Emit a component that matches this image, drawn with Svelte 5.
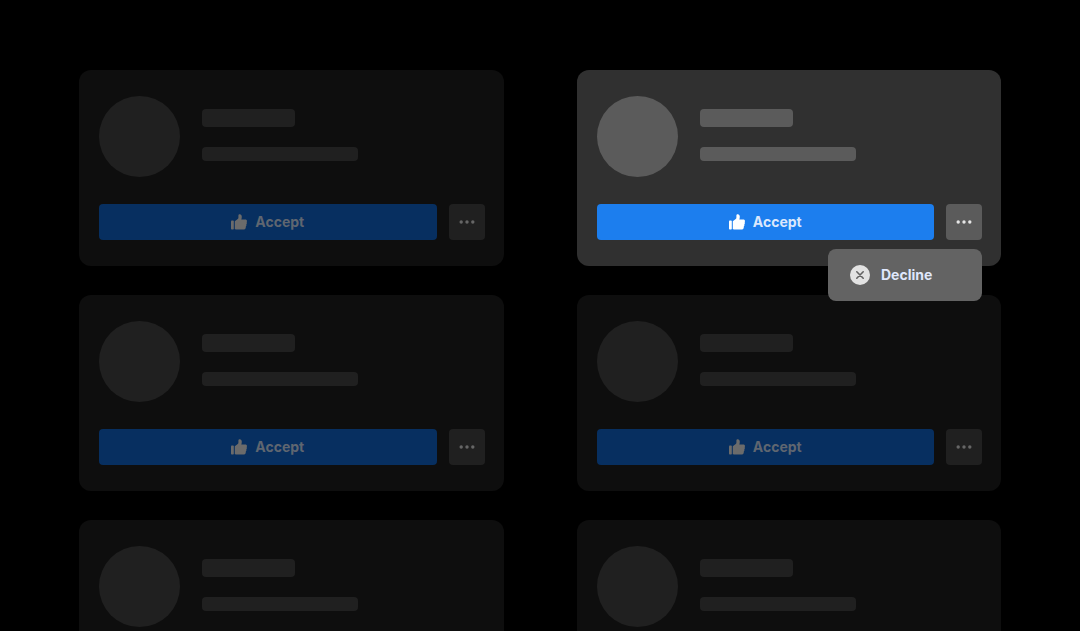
<script lang="ts">
	let requests = $state([
		{ id: 1, open: false },
		{ id: 2, open: true },
		{ id: 3, open: false },
		{ id: 4, open: false },
		{ id: 5, open: false },
		{ id: 6, open: false },
	]);

	function toggleMenu(id: number) {
		for (const request of requests) {
			request.open = request.id === id ? !request.open : false;
		}
	}
</script>

<main class="requests">
	{#each requests as request (request.id)}
		<article class="card" class:active={request.open}>
			<div class="profile">
				<div class="avatar"></div>
				<div class="lines">
					<div class="name"></div>
					<div class="detail"></div>
				</div>
			</div>
			<div class="actions">
				<button type="button" class="accept">
					<svg width="16" height="16" viewBox="0 0 16 16" aria-hidden="true">
						<rect x="0" y="6.6" width="2.8" height="9" rx="0.8" />
						<path
							d="M3.8 7.2 6.7 5.1C7.2 4.7 7.4 4.2 7.4 3.5V1.6C7.4.7 8 .2 8.8.2c1.2 0 2 1.1 2 2.6 0 1.1-.2 1.9-.5 2.6h4c1 0 1.7.6 1.7 1.5 0 .5-.2.8-.4 1.1.2.3.3.6.3 1 0 .6-.2 1-.6 1.3.1.3.2.5.2.8 0 .6-.3 1.1-.7 1.4v.7c0 1.5-1 2.4-2.7 2.4H6.2c-1 0-1.8-.2-2.4-.6Z"
						/>
					</svg>
					<span>Accept</span>
				</button>
				<div class="more-wrap">
					<button
						type="button"
						class="more"
						aria-label="More options"
						aria-expanded={request.open}
						onclick={() => toggleMenu(request.id)}
					>
						<svg width="16" height="4" viewBox="0 0 16 4" aria-hidden="true">
							<circle cx="2.2" cy="2" r="1.7" />
							<circle cx="8" cy="2" r="1.7" />
							<circle cx="13.8" cy="2" r="1.7" />
						</svg>
					</button>
					{#if request.open}
						<button type="button" class="menu">
							<svg width="20" height="20" viewBox="0 0 20 20" aria-hidden="true">
								<circle cx="10" cy="10" r="10" />
								<path class="cross" d="m6.8 6.8 6.4 6.4m0-6.4-6.4 6.4" />
							</svg>
							<span>Decline</span>
						</button>
					{/if}
				</div>
			</div>
		</article>
	{/each}
</main>

<style>
	:global(body) {
		margin: 0;
		background: #000;
	}

	.requests {
		box-sizing: border-box;
		height: 100vh;
		overflow: hidden;
		display: grid;
		grid-template-columns: 1fr 1fr;
		align-content: start;
		gap: 29px 73px;
		padding: 70px 79px 0;
		font-family: Inter, "Liberation Sans", sans-serif;
	}

	.card {
		--card: #0e0e0e;
		--shape: #202020;
		--accent: #072f60;
		--icon: #6b6b6b;
		--text: #5f6670;
		--dots: #666;
		padding: 26px 19px 26px 20px;
		border-radius: 12px;
		background: var(--card);
	}

	.card.active {
		--card: #303030;
		--shape: #5b5b5b;
		--accent: #1c7eee;
		--icon: #fff;
		--text: #dae7fc;
		--dots: #e6e6e6;
	}

	.profile {
		display: flex;
		gap: 22px;
		margin-bottom: 27px;
	}

	.avatar {
		width: 81px;
		height: 81px;
		border-radius: 50%;
		background: var(--shape);
	}

	.lines {
		display: flex;
		flex-direction: column;
		gap: 20px;
		padding-top: 13px;
	}

	.name,
	.detail {
		border-radius: 4px;
		background: var(--shape);
	}

	.name {
		width: 93px;
		height: 18px;
	}

	.detail {
		width: 156px;
		height: 14px;
	}

	.actions {
		display: flex;
		gap: 12px;
	}

	button {
		display: flex;
		align-items: center;
		justify-content: center;
		margin: 0;
		padding: 0;
		border: none;
		border-radius: 4px;
		color: var(--text);
		font: 700 14px/20px Inter, "Liberation Sans", sans-serif;
		cursor: pointer;
	}

	.accept {
		flex: 1;
		gap: 8px;
		height: 36px;
		background: var(--accent);
	}

	.accept svg {
		fill: var(--icon);
	}

	.more-wrap {
		position: relative;
	}

	.more {
		width: 36px;
		height: 36px;
		background: var(--shape);
	}

	.more svg {
		fill: var(--dots);
	}

	.menu {
		position: absolute;
		top: 45px;
		right: 0;
		z-index: 1;
		justify-content: flex-start;
		gap: 11px;
		width: 154px;
		height: 52px;
		padding: 0 22px;
		border-radius: 8px;
		background: #636363;
		color: #dfe7fc;
	}

	.menu svg {
		fill: #e2e2e2;
	}

	.menu .cross {
		stroke: #636363;
		stroke-width: 1.6;
		stroke-linecap: round;
	}
</style>
